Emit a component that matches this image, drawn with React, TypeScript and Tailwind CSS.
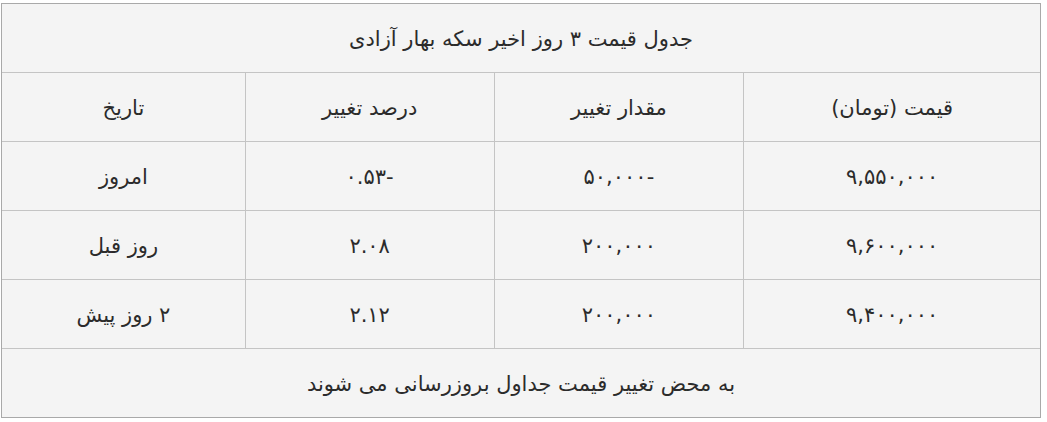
const rows = [
  { price: "۹,۵۵۰,۰۰۰", change: "-۵۰,۰۰۰", percent: "-۰.۵۳", date: "امروز" },
  { price: "۹,۶۰۰,۰۰۰", change: "۲۰۰,۰۰۰", percent: "۲.۰۸", date: "روز قبل" },
  { price: "۹,۴۰۰,۰۰۰", change: "۲۰۰,۰۰۰", percent: "۲.۱۲", date: "۲ روز پیش" },
];

const cell = "border border-[#c4c4c4] text-center align-middle h-[69px] p-0 pt-[3px]";

export default function App() {
  return (
    <div className="bg-white w-[1047px] h-[422px] pt-[3px] pl-[1px]">
      <table
        dir="rtl"
        className="w-[1040px] border-collapse bg-[#f4f4f4] text-[#2b2b2b] text-[21px] outline outline-1 outline-[#a9a9a9] -outline-offset-1"
        style={{ fontFamily: '"DejaVu Sans", "Noto Sans", sans-serif' }}
      >
        <tbody>
          <tr>
            <td colSpan={4} className={cell}>
              جدول قیمت ۳ روز اخیر سکه بهار آزادی
            </td>
          </tr>
          <tr>
            <td className={`${cell} w-[297px]`}>قیمت (تومان)</td>
            <td className={`${cell} w-[250px]`}>مقدار تغییر</td>
            <td className={`${cell} w-[249px]`}>درصد تغییر</td>
            <td className={`${cell} w-[244px]`}>تاریخ</td>
          </tr>
          {rows.map((r) => (
            <tr key={r.price + r.date}>
              <td className={cell}>{r.price}</td>
              <td className={cell}>{r.change}</td>
              <td className={cell}>{r.percent}</td>
              <td className={cell}>{r.date}</td>
            </tr>
          ))}
          <tr>
            <td colSpan={4} className={`${cell} h-[68px]`}>
              به محض تغییر قیمت جداول بروزرسانی می شوند
            </td>
          </tr>
        </tbody>
      </table>
    </div>
  );
}
